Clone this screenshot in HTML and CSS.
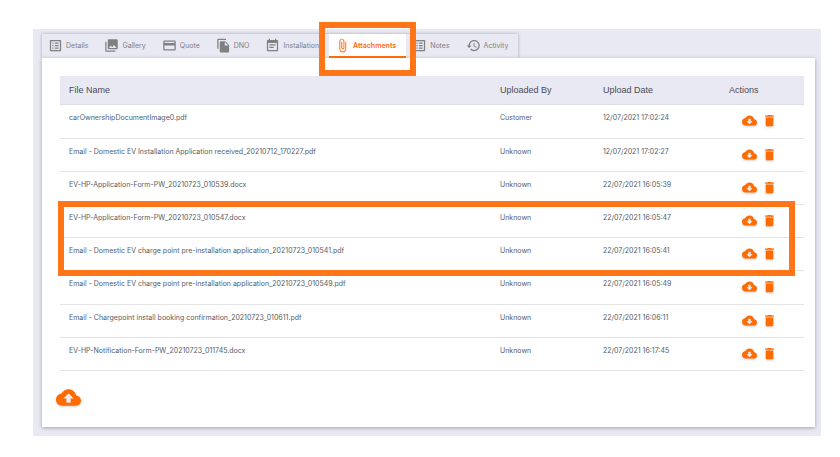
FILE: index.html
```
<!DOCTYPE html>
<html lang="en">
<head>
  <meta charset="UTF-8" />
  <meta name="viewport" content="width=device-width, initial-scale=1.0" />
  <title>Attachments</title>
  <link rel="stylesheet" href="styles.css">
</head>
<body>
  <!-- Shared icons -->
  <svg class="sprite" aria-hidden="true">
    <symbol id="list" viewBox="0 0 24 24"><path d="M19 5v14H5V5h14m1.1-2H3.9c-.5 0-.9.4-.9.9v16.2c0 .4.4.9.9.9h16.2c.4 0 .9-.5.9-.9V3.9c0-.5-.5-.9-.9-.9zM11 7h6v2h-6V7zm0 4h6v2h-6v-2zm0 4h6v2h-6zM7 7h2v2H7zm0 4h2v2H7zm0 4h2v2H7z"/></symbol>
    <symbol id="gallery" viewBox="0 0 24 24"><path d="M22 16V4c0-1.1-.9-2-2-2H8c-1.1 0-2 .9-2 2v12c0 1.1.9 2 2 2h12c1.1 0 2-.9 2-2zm-11-4l2.03 2.71L16 11l4 5H8l3-4zM2 6v14c0 1.1.9 2 2 2h14v-2H4V6H2z"/></symbol>
    <symbol id="card" viewBox="0 0 24 24"><path d="M20 4H4c-1.11 0-1.99.89-1.99 2L2 18c0 1.11.89 2 2 2h16c1.11 0 2-.89 2-2V6c0-1.11-.89-2-2-2zm0 14H4v-6h16v6zm0-10H4V6h16v2z"/></symbol>
    <symbol id="copy" viewBox="0 0 24 24"><path d="M16 1H4c-1.1 0-2 .9-2 2v14h2V3h12V1zm-1 4l6 6v10c0 1.1-.9 2-2 2H7.99C6.89 23 6 22.1 6 21l.01-14c0-1.1.89-2 1.99-2h7zm-1 7h5.5L14 6.5V12z"/></symbol>
    <symbol id="event" viewBox="0 0 24 24"><path d="M17 10H7v2h10v-2zm2-7h-1V1h-2v2H8V1H6v2H5c-1.11 0-1.99.9-1.99 2L3 19c0 1.1.89 2 2 2h14c1.1 0 2-.9 2-2V5c0-1.1-.9-2-2-2zm0 16H5V8h14v11zm-5-5H7v2h7v-2z"/></symbol>
    <symbol id="clip" viewBox="0 0 24 24"><path d="M16.5 6v11.5c0 2.21-1.79 4-4 4s-4-1.79-4-4V5c0-1.38 1.12-2.5 2.5-2.5s2.5 1.12 2.5 2.5v10.5c0 .55-.45 1-1 1s-1-.45-1-1V6H10v9.5c0 1.38 1.12 2.5 2.5 2.5s2.5-1.12 2.5-2.5V5c0-2.21-1.79-4-4-4S7 2.79 7 5v12.5c0 3.04 2.46 5.5 5.5 5.5s5.5-2.46 5.5-5.5V6h-1.5z"/></symbol>
    <symbol id="history" viewBox="0 0 24 24"><path d="M13 3c-4.97 0-9 4.03-9 9H1l3.89 3.89.07.14L9 12H6c0-3.87 3.13-7 7-7s7 3.13 7 7-3.13 7-7 7c-1.93 0-3.68-.79-4.94-2.06l-1.42 1.42C8.27 19.99 10.51 21 13 21c4.97 0 9-4.03 9-9s-4.03-9-9-9zm-1 5v5l4.28 2.54.72-1.21-3.5-2.08V8H12z"/></symbol>
    <symbol id="download" viewBox="0 0 24 24"><path class="hole" d="M7 9h10v9H7z"/><path d="M19.35 10.04C18.67 6.59 15.64 4 12 4 9.11 4 6.6 5.64 5.35 8.04 2.34 8.36 0 10.91 0 14c0 3.31 2.69 6 6 6h13c2.76 0 5-2.24 5-5 0-2.64-2.05-4.78-4.65-4.96zM17 13l-5 5-5-5h3V9h4v4h3z"/></symbol>
    <symbol id="upload" viewBox="0 0 24 24"><path class="hole" d="M7 8h10v9H7z"/><path d="M19.35 10.04C18.67 6.59 15.64 4 12 4 9.11 4 6.6 5.64 5.35 8.04 2.34 8.36 0 10.91 0 14c0 3.31 2.69 6 6 6h13c2.76 0 5-2.24 5-5 0-2.64-2.05-4.78-4.65-4.96zM14 13v4h-4v-4H7l5-5 5 5h-3z"/></symbol>
    <symbol id="trash" viewBox="0 0 24 24"><path d="M6 19c0 1.1.9 2 2 2h8c1.1 0 2-.9 2-2V7H6v12z"/><path d="M19 4h-3.5l-1-1h-5l-1 1H5v2h14V4z"/></symbol>
  </svg>

  <main class="panel">
    <div class="tabs" role="tablist">
      <button class="tab" role="tab"><svg><use href="#list"/></svg>Details</button>
      <button class="tab" role="tab"><svg><use href="#gallery"/></svg>Gallery</button>
      <button class="tab" role="tab"><svg><use href="#card"/></svg>Quote</button>
      <button class="tab" role="tab"><svg><use href="#copy"/></svg>DNO</button>
      <button class="tab" role="tab"><svg><use href="#event"/></svg>Installation</button>
      <button class="tab active" role="tab" aria-selected="true"><svg><use href="#clip"/></svg>Attachments<span class="highlight highlight-tab"></span></button>
      <button class="tab" role="tab"><svg><use href="#list"/></svg>Notes</button>
      <button class="tab" role="tab"><svg><use href="#history"/></svg>Activity</button>
    </div>

    <section class="card">
      <table class="files">
        <thead>
          <tr>
            <th>File Name</th>
            <th class="col-by">Uploaded By</th>
            <th class="col-date">Upload Date</th>
            <th class="col-actions">Actions</th>
          </tr>
        </thead>
        <tbody>
          <tr>
            <td>carOwnershipDocumentImage0.pdf</td>
            <td>Customer</td>
            <td>12/07/2021 17:02:24</td>
            <td><div class="actions"><button aria-label="Download"><svg><use href="#download"/></svg></button><button aria-label="Delete"><svg><use href="#trash"/></svg></button></div></td>
          </tr>
          <tr>
            <td>Email - Domestic EV Installation Application received_20210712_170227.pdf</td>
            <td>Unknown</td>
            <td>12/07/2021 17:02:27</td>
            <td><div class="actions"><button aria-label="Download"><svg><use href="#download"/></svg></button><button aria-label="Delete"><svg><use href="#trash"/></svg></button></div></td>
          </tr>
          <tr>
            <td>EV-HP-Application-Form-PW_20210723_010539.docx</td>
            <td>Unknown</td>
            <td>22/07/2021 16:05:39</td>
            <td><div class="actions"><button aria-label="Download"><svg><use href="#download"/></svg></button><button aria-label="Delete"><svg><use href="#trash"/></svg></button></div></td>
          </tr>
        </tbody>
        <tbody class="marked">
          <tr>
            <td>EV-HP-Application-Form-PW_20210723_010547.docx<span class="highlight highlight-rows"></span></td>
            <td>Unknown</td>
            <td>22/07/2021 16:05:47</td>
            <td><div class="actions"><button aria-label="Download"><svg><use href="#download"/></svg></button><button aria-label="Delete"><svg><use href="#trash"/></svg></button></div></td>
          </tr>
          <tr>
            <td>Email - Domestic EV charge point pre-installation application_20210723_010541.pdf</td>
            <td>Unknown</td>
            <td>22/07/2021 16:05:41</td>
            <td><div class="actions"><button aria-label="Download"><svg><use href="#download"/></svg></button><button aria-label="Delete"><svg><use href="#trash"/></svg></button></div></td>
          </tr>
        </tbody>
        <tbody>
          <tr>
            <td>Email - Domestic EV charge point pre-installation application_20210723_010549.pdf</td>
            <td>Unknown</td>
            <td>22/07/2021 16:05:49</td>
            <td><div class="actions"><button aria-label="Download"><svg><use href="#download"/></svg></button><button aria-label="Delete"><svg><use href="#trash"/></svg></button></div></td>
          </tr>
          <tr>
            <td>Email - Chargepoint install booking confirmation_20210723_010611.pdf</td>
            <td>Unknown</td>
            <td>22/07/2021 16:06:11</td>
            <td><div class="actions"><button aria-label="Download"><svg><use href="#download"/></svg></button><button aria-label="Delete"><svg><use href="#trash"/></svg></button></div></td>
          </tr>
          <tr>
            <td>EV-HP-Notification-Form-PW_20210723_011745.docx</td>
            <td>Unknown</td>
            <td>22/07/2021 16:17:45</td>
            <td><div class="actions"><button aria-label="Download"><svg><use href="#download"/></svg></button><button aria-label="Delete"><svg><use href="#trash"/></svg></button></div></td>
          </tr>
        </tbody>
      </table>
      <button class="upload" aria-label="Upload file"><svg><use href="#upload"/></svg></button>
    </section>
  </main>
</body>
</html>
```

FILE: styles.css
```
* {
  box-sizing: border-box;
}
body {
  margin: 0;
  padding: 29px 19px 21px 33px;
  background: #fff;
  color: #555c66;
  font-family: Inter, "Liberation Sans", sans-serif;
  font-size: 7px;
}
button {
  border: none;
  background: none;
  padding: 0;
  font: inherit;
  color: inherit;
  cursor: pointer;
}
svg {
  display: block;
  fill: currentColor;
}
.sprite {
  position: absolute;
  width: 0;
  height: 0;
}
.panel {
  background: #e9e9f4;
  padding: 5px 6px 9px 9px;
}
.tabs {
  display: flex;
  width: fit-content;
  height: 24px;
  box-shadow: 0 0 3px rgba(0, 0, 0, 0.3);
}
.tab {
  display: flex;
  align-items: center;
  gap: 3px;
  padding: 0 10px 2px 6px;
  color: #808080;
}
.tab svg {
  width: 15px;
  height: 15px;
}
.tab.active {
  position: relative;
  background: #fff;
  color: #ff6b0a;
  font-weight: 600;
  padding-bottom: 0;
  border-bottom: 2px solid #ff6b0a;
}
.highlight {
  position: absolute;
  border: 6px solid #ff7518;
  pointer-events: none;
}
.highlight-tab {
  inset: -12px -10px -20px;
  z-index: 1;
}
.highlight-rows {
  inset: -4px 9px -5px -2px;
}
.card {
  background: #fff;
  padding: 18px 11px 17px 18px;
  box-shadow: 0 1px 4px rgba(0, 0, 0, 0.3);
}
.files {
  width: 100%;
  table-layout: fixed;
  border-collapse: separate;
  border-spacing: 0;
}
.files th {
  height: 29px;
  padding: 0 9px;
  background: #e9e9f4;
  border-bottom: 1px solid #dcdce4;
  color: #4a4a55;
  font-family: "Liberation Sans", Arial, sans-serif;
  font-size: 9px;
  font-weight: normal;
  text-align: left;
}
.files td {
  height: 33px;
  padding: 8px 9px 0;
  border-bottom: 1px solid #e4e4e4;
  line-height: 10px;
  vertical-align: top;
  white-space: nowrap;
}
.files .col-by {
  width: 103px;
}
.files .col-date {
  width: 126px;
}
.files .col-actions {
  width: 84px;
}
.marked {
  position: relative;
}
.files tbody tr:first-child td {
  height: 34px;
}
.files .marked tr:first-child td {
  height: 33px;
}
.actions {
  display: flex;
  gap: 5px;
  padding-left: 13px;
  color: #ff6b00;
}
.actions svg {
  width: 15px;
  height: 15px;
  filter: drop-shadow(0 1px 1px rgba(0, 0, 0, 0.2));
}
.hole {
  fill: #ededed;
}
.upload {
  display: block;
  margin-top: 14px;
  margin-left: -4px;
  color: #ff6b00;
}
.upload svg {
  width: 25px;
  height: 25px;
  filter: drop-shadow(0 1px 1px rgba(0, 0, 0, 0.2));
}
```
